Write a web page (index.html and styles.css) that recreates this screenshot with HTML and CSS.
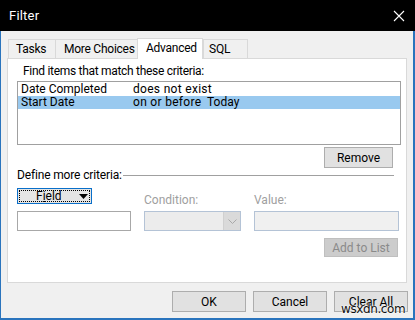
FILE: index.html
```html
<!DOCTYPE html>
<html>
<head>
<meta charset="utf-8">
<link rel="stylesheet" href="styles.css">
</head>
<body>
<div class="win">
  <div class="titlebar">
    <span class="title">Filter</span>
    <svg class="close" width="12" height="12" viewBox="0 0 12 12"><path d="M1 1 L11 11 M11 1 L1 11" stroke="#fff" stroke-width="1.1" fill="none"/></svg>
  </div>
  <div class="client">
    <div class="tabs">
      <div class="tab t-tasks">Tasks</div>
      <div class="tab t-more">More Choices</div>
      <div class="tab sel t-adv">Advanced</div>
      <div class="tab t-sql">SQL</div>
    </div>
    <div class="panel">
      <div class="find">Find items that match these criteria:</div>
      <div class="list">
        <div class="row"><span class="c1">Date Completed</span><span class="c2">does not exist</span><span class="c3"></span></div>
        <div class="row sel"><span class="c1">Start Date</span><span class="c2">on or before</span><span class="c3">Today</span></div>
      </div>
      <div class="right-row"><div class="btn remove">Remove</div></div>
      <div class="group"><span class="group-label">Define more criteria:</span><div class="gline"></div></div>
      <div class="criteria">
        <div class="field-btn"><div class="focus"><span class="ftext">F<u>i</u>eld</span><svg class="farrow" width="9" height="5" viewBox="0 0 9 5"><path d="M0 0 H9 L4.5 5 Z" fill="#000"/></svg></div></div>
        <div class="dlabel">Condition:</div>
        <div class="dlabel">Value:</div>
        <div class="textbox"></div>
        <div class="combo"><div class="combo-btn"><svg width="9" height="5" viewBox="0 0 9 5"><path d="M0.5 0.5 L4.5 4.5 L8.5 0.5" stroke="#a8a8a8" fill="none" stroke-width="1"/></svg></div></div>
        <div class="textbox disabled"></div>
      </div>
      <div class="right-row add-row"><div class="btn dis addlist">Add to List</div></div>
    </div>
    <div class="footer">
      <div class="btn fbtn">OK</div>
      <div class="btn fbtn">Cancel</div>
      <div class="btn fbtn">Clear All</div>
    </div>
  </div>
  <span class="wm">wsxdn.com</span>
</div>
</body>
</html>
```

FILE: styles.css
```css
* { box-sizing: border-box; }
html, body { margin: 0; padding: 0; background: #f0f0f0; }
body {
  font-family: Roboto, "Noto Sans", sans-serif;
  font-size: 12px;
  color: #000;
}
.win {
  position: relative;
  width: 415px;
  height: 320px;
  display: flex;
  flex-direction: column;
}
.titlebar {
  height: 31px;
  background: #000;
  display: flex;
  align-items: center;
  justify-content: space-between;
  padding: 0 10px 0 9px;
  flex: none;
}
.title { color: #fff; font-size: 13px; line-height: 14px; letter-spacing: 0.2px; }
.close { display: block; margin-top: 1px; }
.client {
  flex: 1;
  background: #f0f0f0;
  border-left: 1px solid #2a74bd;
  border-right: 2px solid #2a74bd;
  border-bottom: 2px solid #2a74bd;
  display: flex;
  flex-direction: column;
}
.tabs {
  display: flex;
  align-items: flex-end;
  height: 20px;
  margin-top: 7px;
  padding-left: 7px;
  position: relative;
  z-index: 2;
}
.tab {
  height: 19px;
  border: 1px solid #d9d9d9;
  border-bottom: none;
  background: #f0f0f0;
  line-height: 19px;
  padding-left: 6px;
  margin-left: -1px;
  white-space: nowrap;
  letter-spacing: -0.25px;
}
.t-tasks { width: 48px; margin-left: 0; padding-left: 7px; }
.t-more { width: 83px; padding-left: 8px; }
.t-adv { width: 66px; }
.t-sql { width: 45px; margin-left: 0; padding-left: 5px; }
.tab.sel {
  height: 21px;
  background: #fff;
  margin-bottom: -1px;
  line-height: 18px;
  padding-left: 8px;
}
.panel {
  margin-left: 6px;
  width: 400px;
  height: 225px;
  background: #fff;
  border: 1px solid #d9d9d9;
  padding: 5px 5px 0 9px;
  position: relative;
  z-index: 1;
}
.find { margin-left: 6px; line-height: 14px; height: 14px; letter-spacing: -0.3px; }
.list {
  margin-top: 3px;
  width: 384px;
  height: 64px;
  border: 1px solid #a0a0a0;
  padding-top: 1px;
}
.row {
  display: flex;
  height: 13px;
  line-height: 13px;
  padding-left: 3px;
  white-space: nowrap;
}
.row.sel { background: #99c9ef; }
.c1 { width: 112px; }
.c2 { width: 74px; letter-spacing: 0.3px; }
.right-row { display: flex; justify-content: flex-end; padding-right: 8px; margin-top: 2px; }
.btn {
  height: 21px;
  border: 1px solid #adadad;
  background: #e1e1e1;
  display: flex;
  align-items: center;
  justify-content: center;
  line-height: 14px;
}
.remove { width: 69px; }
.group {
  display: flex;
  align-items: center;
  height: 12px;
  line-height: 12px;
  margin-top: 1px;
  letter-spacing: -0.15px;
}
.gline { flex: 1; height: 1px; background: #a0a0a0; margin: 1px 7px 0 1px; }
.criteria {
  margin-top: 7px;
  display: grid;
  grid-template-columns: 114px 98px 146px;
  column-gap: 12px;
  grid-template-rows: 19px 20px;
  row-gap: 4px;
}
.criteria > :nth-child(2) { margin-left: 1px; }
.criteria > :nth-child(3) { margin-left: 1px; }
.criteria > :nth-child(5) { margin-left: 1px; }
.criteria > :nth-child(6) { margin-left: 1px; }
.field-btn {
  width: 75px;
  height: 16px;
  border: 1px solid #0a6fc9;
  background: #e5e5e5;
  padding: 1px;
}
.focus {
  height: 100%;
  border: 1px dotted #000;
  display: flex;
  align-items: center;
  padding-left: 16px;
  line-height: 12px;
}
.ftext { width: 43px; }
.farrow { display: block; }
.dlabel { color: #a0a0a0; align-self: end; line-height: 14px; }
.textbox {
  height: 20px;
  border: 1px solid #a8a8a8;
  background: #fff;
}
.textbox.disabled { border-color: #b4c3d6; background: #f0f0f0; }
.combo {
  height: 20px;
  border: 1px solid #b4c3d6;
  background: #ececec;
  display: flex;
  justify-content: flex-end;
}
.combo-btn {
  width: 17px;
  background: #dadada;
  border-left: 1px solid #d0d0d0;
  display: flex;
  align-items: center;
  justify-content: center;
}
.combo-btn svg { display: block; }
.add-row { margin-top: 7px; padding-right: 3px; }
.btn.dis { background: #cccccc; border-color: #bfbfbf; color: #8a8a8a; }
.addlist { width: 74px; height: 19px; }
.footer {
  display: flex;
  justify-content: flex-end;
  gap: 7px;
  margin-top: 8px;
  padding-right: 5px;
}
.fbtn { width: 74px; }
.wm {
  position: absolute;
  left: 341px;
  top: 302px;
  font-family: "DejaVu Sans", sans-serif;
  font-size: 12px;
  letter-spacing: -0.4px;
  color: #111;
  text-shadow: 0 0 2px #fff, 0 0 2px #fff;
}
```
